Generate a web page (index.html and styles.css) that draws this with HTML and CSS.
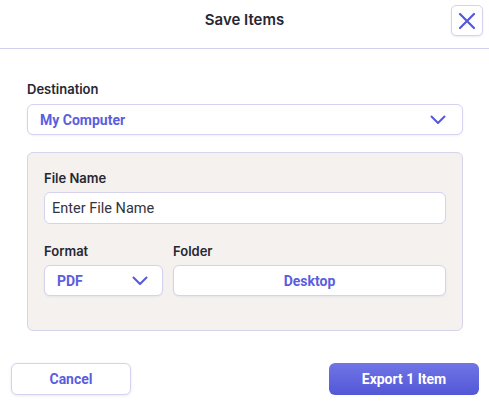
FILE: index.html
```html
<!DOCTYPE html>
<html lang="en">
<head>
    <meta charset="UTF-8">
    <title>Save Items</title>
    <link rel="stylesheet" href="styles.css">
</head>
<body>
    <div class="dialog">
        <div class="header">
            <h1>Save Items</h1>
            <button class="close-btn" aria-label="Close">
                <svg width="18" height="18" viewBox="0 0 18 18">
                    <path d="M2 2 L16 16 M16 2 L2 16" stroke="#5358dc" stroke-width="2.2" stroke-linecap="round" fill="none"/>
                </svg>
            </button>
        </div>

        <div class="body">
            <label class="label">Destination</label>
            <div class="select wide">
                <span>My Computer</span>
                <svg class="chev" width="16" height="10" viewBox="0 0 16 10">
                    <path d="M1.5 1.5 L8 8 L14.5 1.5" stroke="#5358dc" stroke-width="2" stroke-linecap="round" stroke-linejoin="round" fill="none"/>
                </svg>
            </div>

            <div class="panel">
                <label class="label">File Name</label>
                <input class="input" type="text" placeholder="Enter File Name">

                <div class="row">
                    <div class="col format">
                        <label class="label">Format</label>
                        <div class="select small">
                            <span>PDF</span>
                            <svg class="chev" width="16" height="10" viewBox="0 0 16 10">
                                <path d="M1.5 1.5 L8 8 L14.5 1.5" stroke="#5358dc" stroke-width="2" stroke-linecap="round" stroke-linejoin="round" fill="none"/>
                            </svg>
                        </div>
                    </div>
                    <div class="col folder">
                        <label class="label">Folder</label>
                        <button class="btn folder-btn">Desktop</button>
                    </div>
                </div>
            </div>
        </div>

        <div class="footer">
            <button class="btn cancel">Cancel</button>
            <button class="btn primary">Export 1 Item</button>
        </div>
    </div>
</body>
</html>
```

FILE: styles.css
```css
* {
    margin: 0;
    padding: 0;
    box-sizing: border-box;
}

body {
    font-family: Inter, "Noto Sans", sans-serif;
    background: #fff;
    color: #272733;
    width: 489px;
    height: 406px;
    overflow: hidden;
}

.header {
    height: 49px;
    border-bottom: 1px solid #d2d0f0;
    display: flex;
    align-items: center;
    justify-content: center;
    position: relative;
}

.header h1 {
    font-size: 15px;
    font-weight: 600;
    color: #272733;
    margin-top: -10px;
}

.close-btn {
    position: absolute;
    top: 5px;
    right: 6px;
    width: 32px;
    height: 31px;
    background: #fff;
    border: 1px solid #d4d2ef;
    border-radius: 5px;
    display: flex;
    align-items: center;
    justify-content: center;
    box-shadow: 0 1px 2px rgba(80, 80, 160, 0.12);
}

.body {
    padding: 32px 26px 0 27px;
}

.label {
    display: block;
    font-size: 13px;
    font-weight: 600;
    color: #272733;
    line-height: 16px;
    margin-bottom: 7px;
}

.panel .label {
    margin-bottom: 6px;
}

.select {
    height: 31px;
    background: #fff;
    border: 1px solid #d4d2ef;
    border-radius: 6px;
    display: flex;
    align-items: center;
    justify-content: space-between;
    font-family: Roboto, sans-serif;
    font-weight: 700;
    font-size: 14px;
    color: #5a5ede;
    box-shadow: 0 1px 2px rgba(80, 80, 160, 0.08);
}

.select.wide {
    padding: 0 16px 0 12px;
}

.select.small {
    width: 119px;
    padding: 0 14px 0 12px;
}

.panel {
    margin-top: 17px;
    height: 179px;
    background: #f4f1ee;
    border: 1px solid #d6d4ea;
    border-radius: 6px;
    padding: 17px 16px 0 16px;
}

.input {
    display: block;
    width: 402px;
    height: 32px;
    border: 1px solid #d4d2ef;
    border-radius: 6px;
    background: #fff;
    padding: 0 7px;
    font-family: Roboto, sans-serif;
    font-size: 14.5px;
    outline: none;
}

.input::placeholder {
    color: #33333d;
}

.row {
    display: flex;
    gap: 10px;
    margin-top: 19px;
}

.folder {
    flex: 0 0 273px;
}

.btn {
    font-family: Roboto, sans-serif;
    font-weight: 700;
    font-size: 14px;
    cursor: pointer;
}

.folder-btn {
    width: 273px;
    height: 31px;
    background: #fff;
    border: 1px solid #d4d2ef;
    border-radius: 6px;
    color: #5a5ede;
    box-shadow: 0 1px 2px rgba(80, 80, 160, 0.08);
}

.footer {
    display: flex;
    justify-content: space-between;
    padding: 32px 10px 0 11px;
}

.cancel {
    width: 120px;
    height: 32px;
    background: #fff;
    border: 1px solid #d4d2ef;
    border-radius: 6px;
    color: #5a5ede;
    box-shadow: 0 1px 3px rgba(80, 80, 160, 0.12);
}

.primary {
    width: 150px;
    height: 32px;
    border: none;
    border-radius: 6px;
    color: #fff;
    background: linear-gradient(180deg, #7075e6 0%, #5357d6 100%);
}
```
